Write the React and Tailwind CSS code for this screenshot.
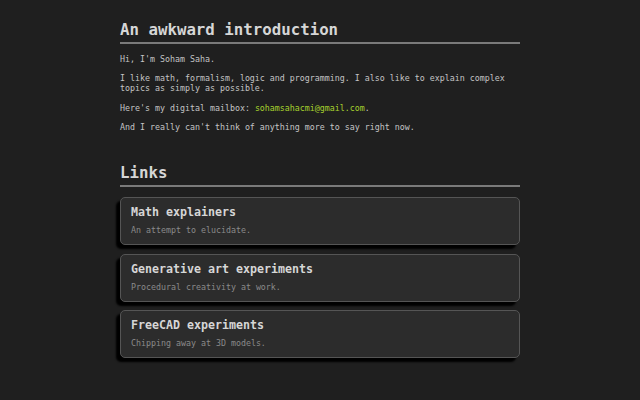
const links = [
  { title: "Math explainers", desc: "An attempt to elucidate." },
  { title: "Generative art experiments", desc: "Procedural creativity at work." },
  { title: "FreeCAD experiments", desc: "Chipping away at 3D models." },
];

function Heading({ children }) {
  return (
    <h2 className="text-[15.75px] leading-[20px] font-bold text-[#d6d6d6] pb-[2px] border-b-2 border-[#7a7a7a]">
      {children}
    </h2>
  );
}

export default function App() {
  return (
    <div className="min-h-[400px] bg-[#1f1f1f] text-[#c4c4c4] font-['DejaVu_Sans_Mono',monospace]">
      <main className="w-[400px] mx-auto pt-[20px] pb-[40px]">
        {/* intro */}
        <section>
          <Heading>An awkward introduction</Heading>
          <div className="mt-[9.5px] flex flex-col gap-[9.5px] text-[8.3px] leading-[10px]">
            <p>Hi, I'm Soham Saha.</p>
            <p>
              I like math, formalism, logic and programming. I also like to explain complex
              topics as simply as possible.
            </p>
            <p>
              Here's my digital mailbox:{" "}
              <a href="#" className="text-[#a6d22e]">
                sohamsahacmi@gmail.com
              </a>
              .
            </p>
            <p>And I really can't think of anything more to say right now.</p>
          </div>
        </section>

        {/* links */}
        <section className="mt-[31px]">
          <Heading>Links</Heading>
          <div className="mt-[10px] flex flex-col gap-[8.5px]">
            {links.map((l) => (
              <a
                key={l.title}
                href="#"
                className="block bg-[#2c2c2c] border border-[#555] rounded-[5px] px-[10px] pt-[7px] pb-[9px] shadow-[-4px_4px_2px_#000]"
              >
                <div className="text-[11.63px] leading-[14px] font-bold text-[#d6d6d6]">{l.title}</div>
                <div className="mt-[6px] text-[8.3px] leading-[10px] text-[#8a8a8a]">{l.desc}</div>
              </a>
            ))}
          </div>
        </section>
      </main>
    </div>
  );
}
